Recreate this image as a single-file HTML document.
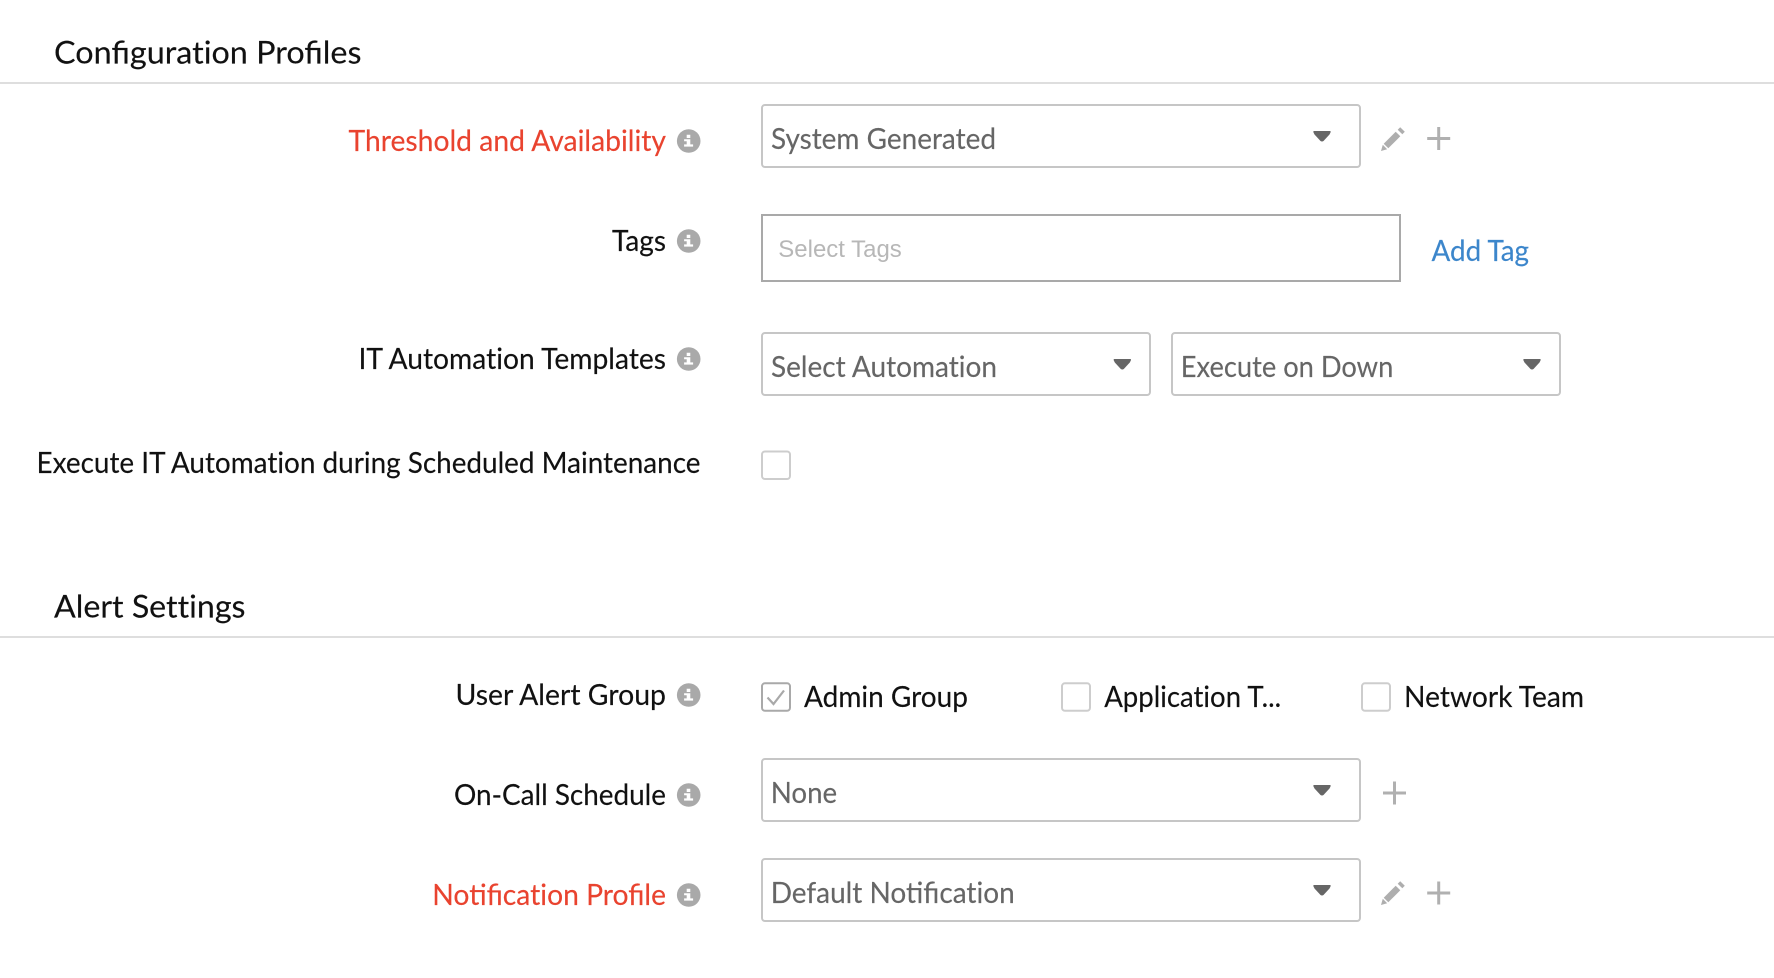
<!DOCTYPE html>
<html lang="en">
<head>
<meta charset="utf-8">
<title>Configuration Profiles</title>
<style>
html,body{margin:0;padding:0;background:#fff;width:1774px;height:978px;overflow:hidden}
svg{display:block}
text{font-family:"Lato","Carlito","Liberation Sans",sans-serif;font-size:29px;fill:#111;stroke:#111;stroke-width:.15px}
.h{font-size:31px}
.r{fill:#e9432f;stroke:#e9432f}
.v{fill:#666;stroke:#666}
.ph{font-family:"Liberation Sans",sans-serif;font-size:24px;fill:#b7b7b7;stroke:none}
.lnk{fill:#3c86cb;stroke:#3c86cb}
.box{fill:#fff;stroke:#c6c6c6;stroke-width:2}
.chk{fill:#fff;stroke:#cdcdcd;stroke-width:2}
</style>
</head>
<body>
<svg width="1774" height="978" viewBox="0 0 1774 978" xmlns="http://www.w3.org/2000/svg">
<defs>
<g id="info"><circle r="11.8" fill="#a9a9a9"/><path fill="#fff" d="M-2-6.2h3.6v3.2H-2zM-4.6-1.8h6.2V3.4H4.4V5.6H-4.6V3.4H-2V0.2H-4.6z"/></g>
<path id="arrow" fill="#666" d="M0.5 0H16.5Q17.5 0 17 1.5L16 3.5 10 10Q8.5 11 7 10L1 3.5 0 1.5Q-.5 0 .5 0z"/>
<g id="pencil" fill="#aeaeae"><path d="M2.7 16.7 14.7 4.7 19.3 9.3 7.3 21.3z"/><path d="M0 24 1.8 17.8 6.2 22.2z"/><path d="M16.7 2.7 19.2.2 23.8 4.8 21.3 7.3z"/></g>
<path id="plus" fill="none" stroke="#b0b0b0" stroke-width="3" d="M-11.5 0H11.5M0-11.5V11.5"/>
</defs>

<text class="h" x="54" y="63.5" textLength="307.5" lengthAdjust="spacingAndGlyphs">Configurat&zwnj;ion Profiles</text>
<rect x="0" y="82" width="1774" height="2" fill="#dedede"/>

<text class="r" x="348.5" y="151" textLength="317.5" lengthAdjust="spacingAndGlyphs">Threshold and Availability</text>
<use href="#info" x="688.7" y="141"/>
<rect class="box" x="762" y="105" width="598" height="62" rx="3"/>
<text class="v" x="771" y="149" textLength="225" lengthAdjust="spacingAndGlyphs">System Generated</text>
<use href="#arrow" x="1313.5" y="131"/>
<use href="#pencil" x="1381" y="127"/>
<use href="#plus" x="1438.7" y="138.5"/>

<text x="612" y="251" textLength="54" lengthAdjust="spacingAndGlyphs">Tags</text>
<use href="#info" x="688.7" y="241"/>
<rect x="762" y="215" width="638" height="66" fill="#fff" stroke="#a9a9a9" stroke-width="2"/>
<text class="ph" x="778.3" y="256.8" textLength="123.5" lengthAdjust="spacingAndGlyphs">Select Tags</text>
<text class="lnk" x="1431.5" y="261" textLength="97.5" lengthAdjust="spacingAndGlyphs">Add Tag</text>

<text x="358.5" y="369" textLength="307.5" lengthAdjust="spacingAndGlyphs">IT Automat&zwnj;ion Templates</text>
<use href="#info" x="688.7" y="359"/>
<rect class="box" x="762" y="333" width="388" height="62" rx="3"/>
<text class="v" x="771" y="376.8" textLength="226" lengthAdjust="spacingAndGlyphs">Select Automat&zwnj;ion</text>
<use href="#arrow" x="1113.8" y="359"/>
<rect class="box" x="1172" y="333" width="388" height="62" rx="3"/>
<text class="v" x="1180.8" y="376.8" textLength="212.5" lengthAdjust="spacingAndGlyphs">Execute on Down</text>
<use href="#arrow" x="1523.5" y="359"/>

<text x="36.5" y="472.8" textLength="664" lengthAdjust="spacingAndGlyphs">Execute IT Automat&zwnj;ion during Scheduled Maintenance</text>
<rect class="chk" x="762" y="451.5" width="28" height="27.5" rx="3"/>

<text class="h" x="54" y="617.5" textLength="191.5" lengthAdjust="spacingAndGlyphs">Alert Set&zwnj;t&zwnj;ings</text>
<rect x="0" y="636" width="1774" height="2" fill="#dedede"/>

<text x="455.5" y="704.8" textLength="210.5" lengthAdjust="spacingAndGlyphs">User Alert Group</text>
<use href="#info" x="688.7" y="695"/>
<rect x="762" y="683.3" width="28" height="27.5" rx="3" fill="#fff" stroke="#a9a9a9" stroke-width="2"/>
<path d="M767.5 697.5 773.5 704 784 690.5" fill="none" stroke="#a9a9a9" stroke-width="2.2"/>
<text x="804" y="707" textLength="164" lengthAdjust="spacingAndGlyphs">Admin Group</text>
<rect class="chk" x="1062" y="683.3" width="28" height="27.5" rx="3"/>
<text x="1104.2" y="707" textLength="177" lengthAdjust="spacingAndGlyphs">Applicat&zwnj;ion T...</text>
<rect class="chk" x="1362" y="683.3" width="28" height="27.5" rx="3"/>
<text x="1404" y="707" textLength="180" lengthAdjust="spacingAndGlyphs">Network Team</text>

<text x="454" y="804.8" textLength="212" lengthAdjust="spacingAndGlyphs">On-Call Schedule</text>
<use href="#info" x="688.7" y="795"/>
<rect class="box" x="762" y="759" width="598" height="62" rx="3"/>
<text class="v" x="770.7" y="802.8" textLength="66.5" lengthAdjust="spacingAndGlyphs">None</text>
<use href="#arrow" x="1313.5" y="785"/>
<use href="#plus" x="1394.5" y="793"/>

<text class="r" x="432.3" y="904.8" textLength="233.7" lengthAdjust="spacingAndGlyphs">Notificat&zwnj;ion Profile</text>
<use href="#info" x="688.7" y="895"/>
<rect class="box" x="762" y="859" width="598" height="62" rx="3"/>
<text class="v" x="770.7" y="902.8" textLength="244" lengthAdjust="spacingAndGlyphs">Default Notificat&zwnj;ion</text>
<use href="#arrow" x="1313.5" y="885"/>
<use href="#pencil" x="1381" y="881"/>
<use href="#plus" x="1438.7" y="893"/>
</svg>
</body>
</html>
